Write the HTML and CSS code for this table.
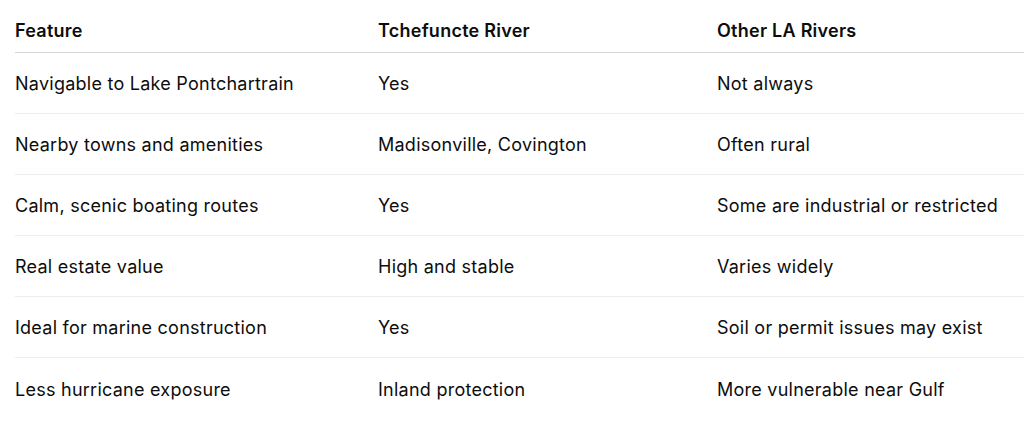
FILE: index.html
```html
<!DOCTYPE html>
<html>
<head>
<meta charset="utf-8">
<link rel="stylesheet" href="styles.css">
</head>
<body>
<div class="table">
  <div class="row head">
    <div class="cell">Feature</div>
    <div class="cell">Tchefuncte River</div>
    <div class="cell">Other LA Rivers</div>
  </div>
  <div class="row">
    <div class="cell">Navigable to Lake Pontchartrain</div>
    <div class="cell">Yes</div>
    <div class="cell">Not always</div>
  </div>
  <div class="row">
    <div class="cell">Nearby towns and amenities</div>
    <div class="cell">Madisonville, Covington</div>
    <div class="cell">Often rural</div>
  </div>
  <div class="row">
    <div class="cell">Calm, scenic boating routes</div>
    <div class="cell">Yes</div>
    <div class="cell">Some are industrial or restricted</div>
  </div>
  <div class="row">
    <div class="cell">Real estate value</div>
    <div class="cell">High and stable</div>
    <div class="cell">Varies widely</div>
  </div>
  <div class="row">
    <div class="cell">Ideal for marine construction</div>
    <div class="cell">Yes</div>
    <div class="cell">Soil or permit issues may exist</div>
  </div>
  <div class="row last">
    <div class="cell">Less hurricane exposure</div>
    <div class="cell">Inland protection</div>
    <div class="cell">More vulnerable near Gulf</div>
  </div>
</div>
</body>
</html>
```
FILE: styles.css
```css
html, body {
  margin: 0;
  padding: 0;
  background: #ffffff;
}
body {
  font-family: Inter, "Noto Sans", sans-serif;
  font-size: 18px;
  letter-spacing: 0.25px;
  color: #0d0d0d;
  overflow: hidden;
}
.table {
  margin: 8px 0 0 15px;
  width: 1040px;
}
.row {
  display: grid;
  grid-template-columns: 363px 339px 1fr;
  height: 61px;
  align-items: center;
  border-bottom: 1px solid #ececec;
  box-sizing: border-box;
  padding-top: 1px;
}
.row.head {
  height: 45px;
  padding-top: 0;
  font-weight: 600;
  border-bottom-color: #d6d6d6;
}
.row.last {
  border-bottom: none;
}
.cell {
  white-space: nowrap;
}
```
